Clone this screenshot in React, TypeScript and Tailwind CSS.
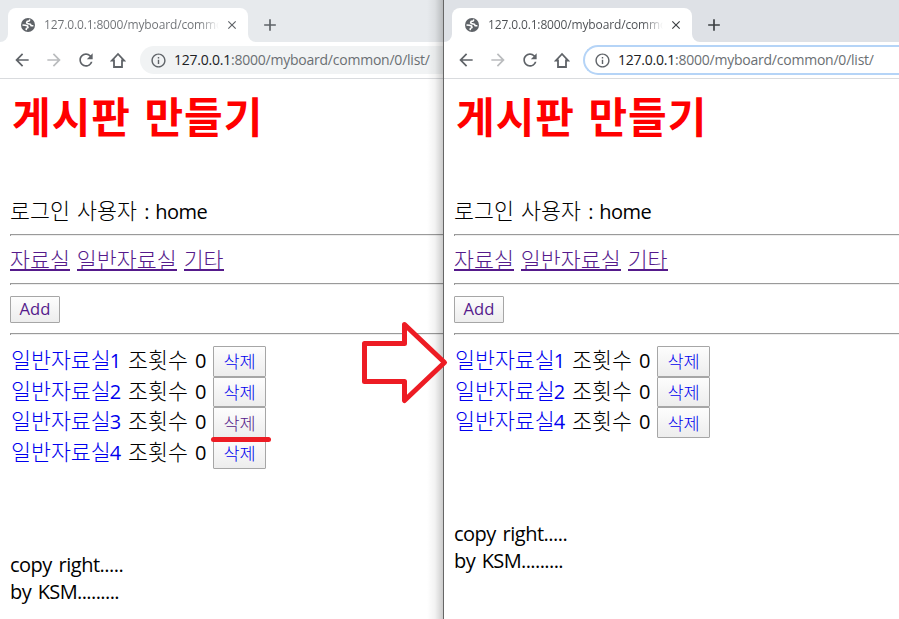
import React from "react";
import { MdArrowBack, MdArrowForward, MdRefresh, MdInfoOutline, MdClose, MdAdd } from "react-icons/md";

const ui = "font-['Open_Sans','Noto_Sans_CJK_KR',sans-serif]";

function Globe() {
  return (
    <svg width="14" height="14" viewBox="0 0 14 14" className="block">
      <circle cx="7" cy="7" r="7" fill="#5f6368" />
      <path
        d="M8.8 1.5 L8.2 3 L6.2 3.4 L5.6 4.8 L7 5.8 L9.4 6.2 L10.2 7.8 L12.4 7.8 M1.5 7 L4.4 7.2 L6.6 8 L7 9.6 L5.4 10.4 L5.2 12.2"
        fill="none"
        stroke="#fff"
        strokeWidth="1.6"
        strokeLinejoin="round"
      />
    </svg>
  );
}

function Home() {
  return (
    <svg width="16" height="17" viewBox="0 0 16 17" className="block">
      <path d="M8 2 L2 8.5 H4 V15 H12 V8.5 H14 Z" fill="none" stroke="#5f6368" strokeWidth="1.8" />
    </svg>
  );
}

function Browser({ active }: { active?: boolean }) {
  const dark = active ? "text-[#3c4043]" : "text-[#5f6368]";
  return (
    <header className={ui}>
      <div className={`flex h-[42px] items-end ${active ? "bg-[#dee1e6]" : "bg-[#e7eaed]"}`}>
        <div className="h-2 w-2 bg-white">
          <div className={`h-2 w-2 rounded-br-lg ${active ? "bg-[#dee1e6]" : "bg-[#e7eaed]"}`} />
        </div>
        <div className="flex h-[34px] w-[240px] items-center rounded-t-lg bg-white pl-[13px]">
          <Globe />
          <div
            className={`ml-[9px] w-[175px] overflow-hidden whitespace-nowrap bg-clip-text text-[12px] leading-4 tracking-[-0.14px] text-transparent bg-linear-to-r from-88% to-white to-100% ${
              active ? "from-[#4a4d51]" : "from-[#6e7175]"
            }`}
          >
            127.0.0.1:8000/myboard/common
          </div>
          <MdClose size={14} className={`ml-[6px] ${dark}`} />
        </div>
        <div className="h-2 w-2 bg-white">
          <div className={`h-2 w-2 rounded-bl-lg ${active ? "bg-[#dee1e6]" : "bg-[#e7eaed]"}`} />
        </div>
        <MdAdd size={20} className={`mb-[7px] ml-[4px] ${dark}`} />
      </div>
      <div className="flex h-[37px] items-center border-b border-[#d9dbde] bg-white pl-[12px]">
        <MdArrowBack size={20} className="text-[#5f6368]" />
        <MdArrowForward size={20} className="ml-3 text-[#babcbe]" />
        <MdRefresh size={20} className="ml-3 text-[#5f6368]" />
        <div className="ml-[14px]">
          <Home />
        </div>
        <div
          className={`flex flex-1 items-center rounded-l-full ${
            active
              ? "ml-[13px] h-[30px] border-2 border-r-0 border-[#b5d4f7] bg-white pl-[9px]"
              : "ml-[14px] h-[28px] bg-[#f1f3f4] pl-[10px]"
          }`}
        >
          <MdInfoOutline size={17} className="text-[#5f6368]" />
          <div className="ml-[7px] whitespace-nowrap text-[14px] leading-5 tracking-[-0.23px] text-[#6b6f73]">
            <span className="text-[#202124]">127.0.0.1</span>:8000/myboard/common/0/list/
          </div>
        </div>
      </div>
    </header>
  );
}

function Rule() {
  return <div className="h-[2px] border-t border-l border-t-[#9a9a9a] border-l-[#9a9a9a] bg-[#eee]" />;
}

const btn = "flex items-center justify-center rounded-[1px] border border-[#a6a6a6] bg-linear-to-b from-[#fdfdfd] to-[#ededed]";

function Board({ items, visited }: { items: number[]; visited?: number }) {
  return (
    <main className="pl-[10px] font-['Open_Sans','Noto_Sans_CJK_KR',sans-serif] text-[20px] text-black">
      <h1 className="h-[108px] pt-[6px] pl-[2px] font-['Noto_Sans_CJK_KR',sans-serif] text-[42px] leading-[60px] font-bold tracking-[1px] whitespace-nowrap text-[#ff0000] [word-spacing:3px]">
        게시판 만들기
      </h1>
      <p className="h-[47px] pt-[9px] leading-[27px] whitespace-nowrap [word-spacing:2px]">
        <K>로그인</K> <K>사용자</K> <span className="tracking-[-0.6px]">: home</span>
      </p>
      <Rule />
      <nav className="flex h-[47px] gap-[7px] pt-[11px] text-[#551a8b]">
        {["자료실", "일반자료실", "기타"].map((t) => (
          <a key={t} className="h-[24px] border-b-2 border-[#551a8b] leading-[23px]">
            <K>{t}</K>
          </a>
        ))}
      </nav>
      <Rule />
      <div className="h-[48px] pt-[11px]">
        <button className={`${btn} h-[27px] w-[50px] text-[16.6px] text-[#551a8b]`}>Add</button>
      </div>
      <Rule />
      <ul className="pt-[11px]">
        {items.map((n) => (
          <li key={n} className="flex h-[30.7px]">
            <a className="w-[118px] pl-px leading-[26px] text-[#0000ee]">
              <K>일반자료실</K>
              <span className="-ml-px">{n}</span>
            </a>
            <span className="w-[85px] leading-[26px] whitespace-nowrap [word-spacing:2px]">
              <K>조횟수</K> 0
            </span>
            <button
              className={`${btn} h-[30.7px] w-[53px] font-['Noto_Sans_CJK_KR',sans-serif] text-[17.5px] font-light ${
                n === visited ? "text-[#551a8b]" : "text-[#0000ee]"
              }`}
            >
              삭제
            </button>
          </li>
        ))}
      </ul>
      <footer className="pt-[82px] leading-[27px] tracking-[-0.5px] [word-spacing:2px]">
        <p>copy right.....</p>
        <p className="tracking-[-0.6px]">by KSM.........</p>
      </footer>
    </main>
  );
}

function K({ children }: { children: React.ReactNode }) {
  return <span className="font-['Noto_Sans_CJK_KR',sans-serif] text-[21.7px] font-light tracking-normal">{children}</span>;
}

export default function App() {
  return (
    <div className="relative flex h-[619px] w-[899px] overflow-hidden bg-white">
      <section className="relative w-[443px] overflow-hidden">
        <Browser />
        <Board items={[1, 2, 3, 4]} visited={3} />
        <div className="absolute inset-y-0 right-0 w-[16px] bg-linear-to-r from-transparent via-black/5 to-black/20" />
      </section>
      <section className="w-[456px] overflow-hidden border-l border-[#666]">
        <Browser active />
        <Board items={[1, 2, 4]} />
      </section>
      <svg width="899" height="619" className="pointer-events-none absolute inset-0">
        <path d="M213.5 439.5H268.5" stroke="#ed1c24" strokeWidth="5" strokeLinecap="round" />
        <path
          d="M364.5 343.5H404.5V324.5L444.5 362.5L404.5 400.5V381.5H364.5Z"
          fill="white"
          stroke="#ed1c24"
          strokeWidth="5"
          strokeLinejoin="round"
        />
      </svg>
    </div>
  );
}
